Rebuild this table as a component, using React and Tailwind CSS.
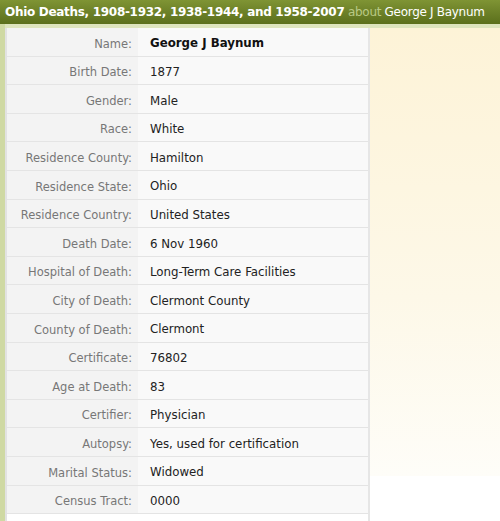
import React from "react";

const rows = [
  ["Name:", "George J Baynum", true],
  ["Birth Date:", "1877"],
  ["Gender:", "Male"],
  ["Race:", "White"],
  ["Residence County:", "Hamilton"],
  ["Residence State:", "Ohio"],
  ["Residence Country:", "United States"],
  ["Death Date:", "6 Nov 1960"],
  ["Hospital of Death:", "Long-Term Care Facilities"],
  ["City of Death:", "Clermont County"],
  ["County of Death:", "Clermont"],
  ["Certificate:", "76802"],
  ["Age at Death:", "83"],
  ["Certifier:", "Physician"],
  ["Autopsy:", "Yes, used for certification"],
  ["Marital Status:", "Widowed"],
  ["Census Tract:", "0000"],
];

export default function App() {
  return (
    <div
      className="w-[500px] h-[521px] overflow-hidden bg-white"
      style={{ fontFamily: "'DejaVu Sans', Verdana, sans-serif" }}
    >
      <div className="h-[24px] bg-gradient-to-b from-[#7f9434] to-[#5b6f1c] text-white text-[12px] leading-[24px] pl-[5px] whitespace-nowrap tracking-[-0.3px]">
        <span className="font-bold">Ohio Deaths, 1908-1932, 1938-1944, and 1958-2007</span>{" "}
        <span className="text-[#b9c985]">about</span> George J Baynum
      </div>
      <div className="flex h-[497px]">
        <div className="w-[5px] bg-[#cfd9a3]" />
        <div className="flex-1 flex flex-col">
          <div className="h-[4px] bg-[#dde4bd]" />
          <div className="flex-1 flex">
            <div className="w-[2px] bg-[#e2e2e2]" />
            <div className="w-[363px] border-r-2 border-[#e6e6e6]">
              {rows.map(([label, value, bold], i) => (
                <div key={i} className="flex h-[28.6px] border-b border-[#e4e4e4]">
                  <div className="w-[131px] bg-[#f3f3f3] text-[#777] text-[11.5px] pr-[6px] pt-[5px] flex items-center justify-end whitespace-nowrap">
                    {label}
                  </div>
                  <div className={`flex-1 bg-[#f9f9f9] pl-[12px] pt-[5px] text-[11.8px] flex items-center whitespace-nowrap ${bold ? "font-bold text-[#111]" : "text-[#222]"}`}>
                    {value}
                  </div>
                </div>
              ))}
            </div>
            <div className="flex-1 flex flex-col">
              <div className="h-[448px] bg-gradient-to-b from-[#fdf3d7] via-[#fdf8e8] via-60% to-[#fefdf8]" />
              <div className="flex-1 bg-white" />
            </div>
          </div>
        </div>
      </div>
    </div>
  );
}
